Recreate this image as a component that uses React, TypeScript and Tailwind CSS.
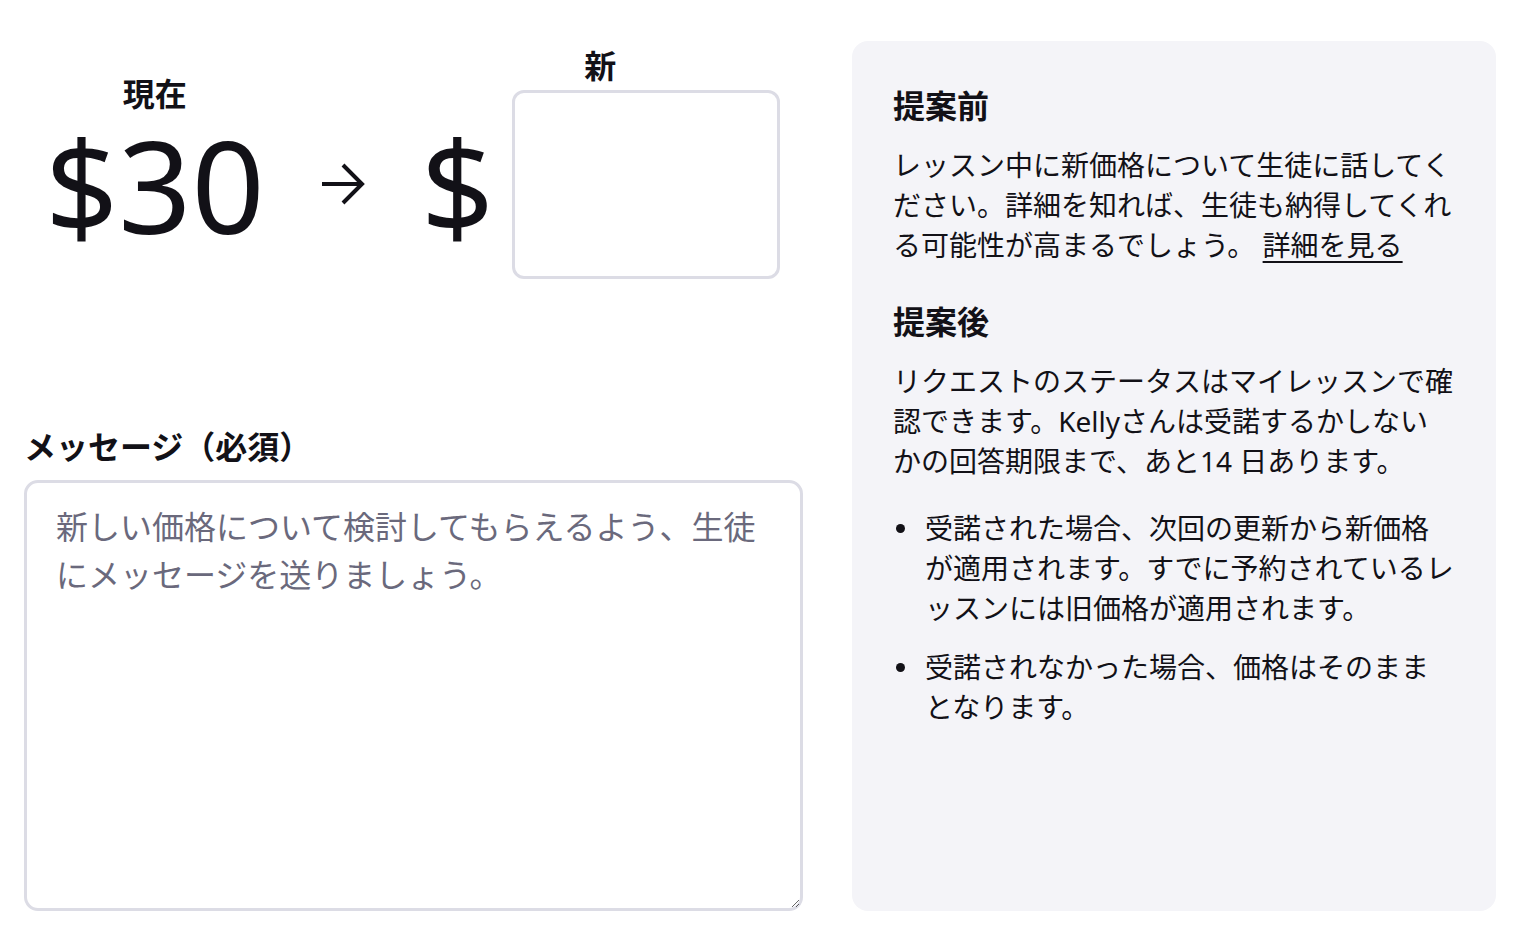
import React from "react";

const font = { fontFamily: '"Noto Sans", "Noto Sans CJK JP", sans-serif' };

export default function App() {
  return (
    <div
      className="flex gap-[49px] pt-[41px] pl-[24px] pr-[30px] pb-[25px] bg-white text-[#121117]"
      style={font}
    >
      {/* Left column */}
      <div className="flex w-[779px] shrink-0 flex-col justify-between">
        <div className="ml-[21px] mt-[5px] flex items-center">
          <div className="flex flex-col items-center pb-[3px]">
            <div className="text-[32px] font-bold leading-[40px]">現在</div>
            <div className="mt-[7px] text-[128px] leading-[128px]">$30</div>
          </div>
          <div className="mx-[56px] mt-[42px] shrink-0">
            <svg width="44" height="42" viewBox="0 0 44 42" fill="none">
              <path
                d="M1 21 H41 M22 2 L41 21 L22 40"
                stroke="#121117"
                strokeWidth="4"
                strokeLinejoin="miter"
              />
            </svg>
          </div>
          <div className="flex flex-col items-center">
            <div className="text-[32px] font-bold leading-[40px]">新</div>
            <div className="mt-[4px] flex items-center gap-[18px]">
              <div className="text-[128px] leading-[128px]">$</div>
              <input
                type="text"
                className="h-[189px] w-[268px] rounded-[12px] border-[3px] border-[#dcdce5] bg-white px-4 text-[32px] outline-none"
              />
            </div>
          </div>
        </div>

        <div className="flex flex-col">
          <div className="text-[32px] font-bold leading-[40px]">メッセージ（必須）</div>
          <textarea
            className="mt-[13px] h-[431px] w-full rounded-[14px] border-[3px] border-[#dcdce5] bg-white px-[29px] pt-[20px] text-[32px] leading-[48px] text-[#121117] outline-none placeholder:text-[#6a697c]"
            placeholder="新しい価格について検討してもらえるよう、生徒にメッセージを送りましょう。"
          />
        </div>
      </div>

      {/* Right panel */}
      <div className="h-[870px] w-[644px] shrink-0 rounded-2xl bg-[#f4f4f8] pl-[41px] pr-[36px] pt-[45px]">
        <h2 className="text-[32px] font-bold leading-[40px]">提案前</h2>
        <p className="mt-[19px] w-[562px] text-[28px] leading-[40px]">
          レッスン中に新価格について生徒に話してください。詳細を知れば、生徒も納得してくれる可能性が高まるでしょう。{" "}
          <a href="#" className="underline decoration-2 underline-offset-[5px]">
            詳細を見る
          </a>
        </p>

        <h2 className="mt-[37px] text-[32px] font-bold leading-[40px]">提案後</h2>
        <p className="mt-[19px] w-[562px] text-[28px] leading-[40px]">
          リクエストのステータスはマイレッスンで確認できます。Kellyさんは受諾するかしないかの回答期限まで、あと14 日あります。
        </p>

        <ul className="mt-[27px] flex flex-col gap-[19px] text-[28px] leading-[40px]">
          <li className="flex">
            <div className="w-[32px] shrink-0 pt-[16px]">
              <div className="ml-[3px] h-[9px] w-[9px] rounded-full bg-[#121117]" />
            </div>
            <div>
              受諾された場合、次回の更新から新価格
              <br />
              が適用されます。すでに予約されているレッスンには旧価格が適用されます。
            </div>
          </li>
          <li className="flex">
            <div className="w-[32px] shrink-0 pt-[16px]">
              <div className="ml-[3px] h-[9px] w-[9px] rounded-full bg-[#121117]" />
            </div>
            <div>
              受諾されなかった場合、価格はそのまま
              <br />
              となります。
            </div>
          </li>
        </ul>
      </div>
    </div>
  );
}
